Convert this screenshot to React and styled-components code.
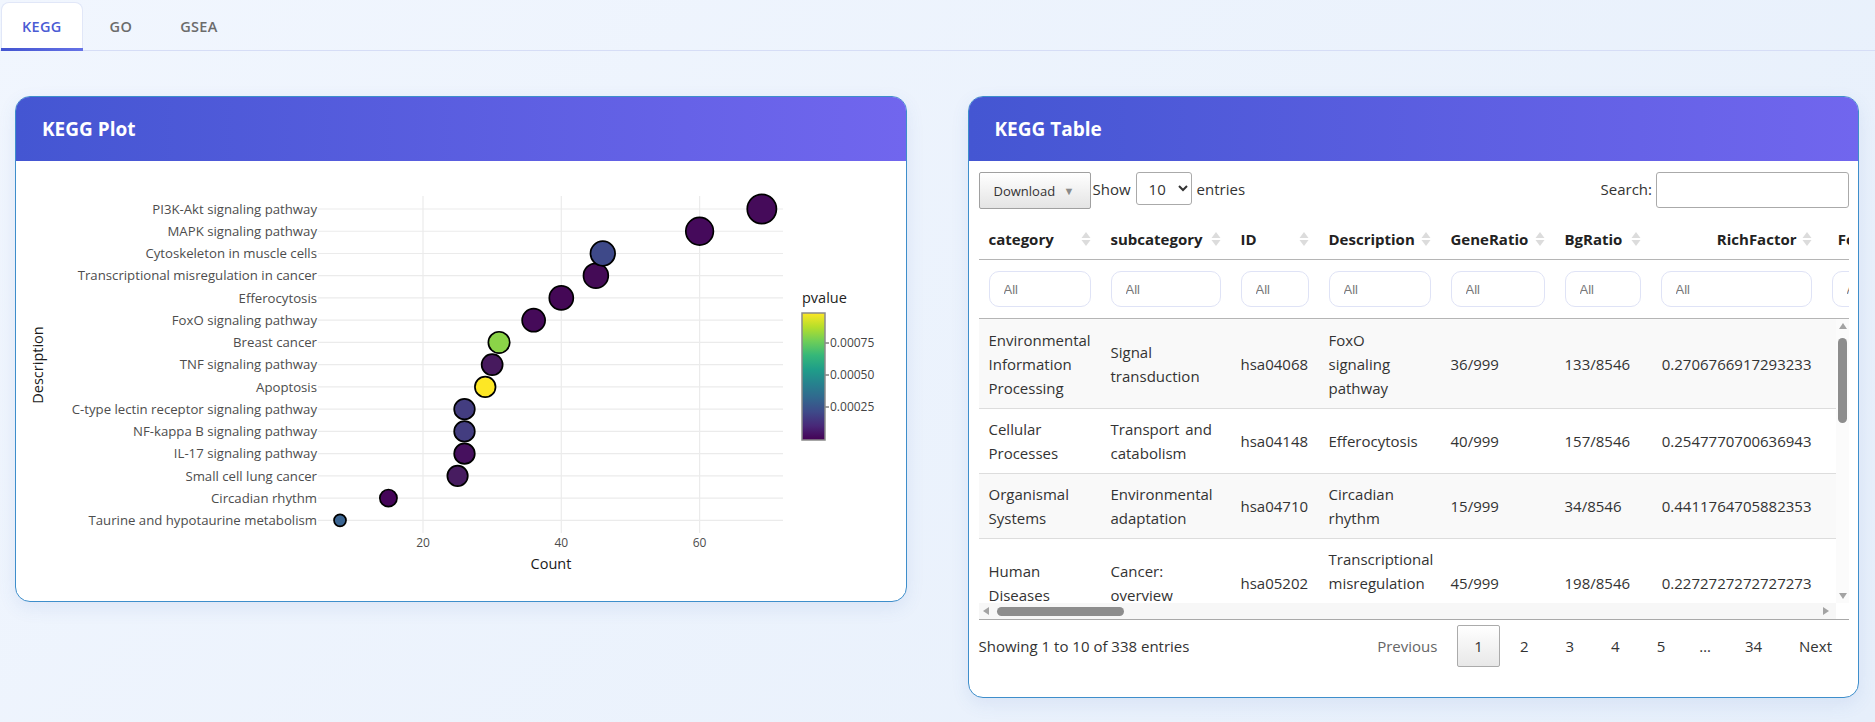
import React from 'react';
import styled, { createGlobalStyle } from 'styled-components';

const GlobalStyle = createGlobalStyle`
  html { min-height: 100%; }
  body {
    margin: 0;
    min-height: 722px;
    font-family: "Open Sans", "Noto Sans", sans-serif;
    color: #333;
    background: linear-gradient(135deg, #f1f6fe 0%, #e6effb 100%);
  }
  * { box-sizing: border-box; }
`;

// ---- data ----
const pathways = [
  { name: 'PI3K-Akt signaling pathway', count: 69, r: 14.6, color: '#450b5a' },
  { name: 'MAPK signaling pathway', count: 60, r: 13.8, color: '#450a5b' },
  { name: 'Cytoskeleton in muscle cells', count: 46, r: 12.3, color: '#3e4989' },
  { name: 'Transcriptional misregulation in cancer', count: 45, r: 12.4, color: '#440b56' },
  { name: 'Efferocytosis', count: 40, r: 12, color: '#440856' },
  { name: 'FoxO signaling pathway', count: 36, r: 11.5, color: '#450a59' },
  { name: 'Breast cancer', count: 31, r: 10.7, color: '#8bd448' },
  { name: 'TNF signaling pathway', count: 30, r: 10.5, color: '#471a5e' },
  { name: 'Apoptosis', count: 29, r: 10.3, color: '#fde725' },
  { name: 'C-type lectin receptor signaling pathway', count: 26, r: 10.3, color: '#433d80' },
  { name: 'NF-kappa B signaling pathway', count: 26, r: 10.3, color: '#433d80' },
  { name: 'IL-17 signaling pathway', count: 26, r: 10.3, color: '#46105e' },
  { name: 'Small cell lung cancer', count: 25, r: 10.2, color: '#471c60' },
  { name: 'Circadian rhythm', count: 15, r: 8.6, color: '#450559' },
  { name: 'Taurine and hypotaurine metabolism', count: 8, r: 6, color: '#3b6592' },
];

const viridis = ['#440154', '#482878', '#3e4a89', '#31688e', '#26828e', '#1f9e89', '#35b779', '#6ece58', '#b5de2b', '#fde725'];

const columns = [
  { key: 'category', w: 122 },
  { key: 'subcategory', w: 130 },
  { key: 'ID', w: 88 },
  { key: 'Description', w: 122 },
  { key: 'GeneRatio', w: 114 },
  { key: 'BgRatio', w: 96 },
  { key: 'RichFactor', w: 171, num: true },
  { key: 'FoldEnrichment', w: 160, num: true },
  { key: 'zScore', w: 150, num: true },
  { key: 'pvalue', w: 200, num: true },
  { key: 'p.adjust', w: 200, num: true },
  { key: 'qvalue', w: 200, num: true },
  { key: 'geneID', w: 3700 },
  { key: 'Count', w: 90, num: true },
];
const tableWidth = columns.reduce((s, c) => s + c.w, 0);

const rows = [
  ['Environmental Information Processing', 'Signal transduction', 'hsa04068', 'FoxO signaling pathway', '36/999', '133/8546', '0.2706766917293233', '2.31548169738554', '5.09736', '1.43e-06', '0.000161', '0.000131', 'FOXO1/FOXO3/CDKN1A/GADD45A/SGK1/IRS2/BCL6/PLK2/TGFB2/KLF2', '36'],
  ['Cellular Processes', 'Transport and catabolism', 'hsa04148', 'Efferocytosis', '40/999', '157/8546', '0.2547770700636943', '2.17947183297029', '4.98751', '1.52e-06', '0.000161', '0.000131', 'MERTK/AXL/GAS6/CD36/ITGB3/ABCA1/NR4A1/PPARG/IL10/TGFB1', '40'],
  ['Organismal Systems', 'Environmental adaptation', 'hsa04710', 'Circadian rhythm', '15/999', '34/8546', '0.4411764705882353', '3.77394159926981', '5.21472', '4.02e-06', '0.000248', '0.000202', 'PER1/PER2/PER3/CRY1/CRY2/ARNTL/NR1D1/BHLHE40/BHLHE41', '15'],
  ['Human Diseases', 'Cancer: overview', 'hsa05202', 'Transcriptional misregulation in cancer', '45/999', '198/8546', '0.2272727272727273', '1.94419419419419', '4.46123', '1.13e-05', '0.000515', '0.000419', 'CEBPA/CEBPB/ID2/MYC/NR4A3/RUNX1/BCL6/CDKN1A/PLAT/IL6', '45'],
  ['Environmental Information Processing', 'Signal transduction', 'hsa04151', 'PI3K-Akt signaling pathway', '69/999', '362/8546', '0.1906077348066298', '1.63053446931898', '3.89052', '3.09e-05', '0.00102', '0.000829', 'AKT3/COL1A1/COL4A1/EGFR/FGF2/IL6/ITGA5/KDR/PDGFRB/VEGFA', '69'],
  ['Environmental Information Processing', 'Signal transduction', 'hsa04010', 'MAPK signaling pathway', '60/999', '300/8546', '0.2', '1.71091091091091', '4.01245', '2.87e-05', '0.00102', '0.000829', 'DUSP1/DUSP6/FOS/JUN/MAP3K8/NR4A1/RASGRP3/TGFB2/FGF7', '60'],
  ['Organismal Systems', 'Immune system', 'hsa04657', 'IL-17 signaling pathway', '26/999', '95/8546', '0.2736842105263158', '2.34120909910383', '3.70214', '9.68e-05', '0.00251', '0.00204', 'CXCL1/CXCL2/CXCL8/FOS/FOSB/JUN/IL6/MMP3/PTGS2/S100A8', '26'],
  ['Cellular Processes', 'Cell growth and death', 'hsa04210', 'Apoptosis', '29/999', '136/8546', '0.2132352941176471', '1.82409468586233', '3.01872', '0.000962', '0.0124', '0.0101', 'BCL2/BIRC3/CASP8/FOS/GADD45A/JUN/TNFRSF10B/TUBA1A', '29'],
  ['Environmental Information Processing', 'Signal transduction', 'hsa04668', 'TNF signaling pathway', '30/999', '119/8546', '0.2521008403361345', '2.15655156833308', '3.66408', '8.21e-05', '0.00236', '0.00192', 'BIRC3/CCL2/CXCL1/CXCL2/FOS/JUNB/IL6/NFKBIA/SOCS3', '30'],
  ['Human Diseases', 'Cancer: specific types', 'hsa05222', 'Small cell lung cancer', '25/999', '93/8546', '0.2688172043010753', '2.29958514152021', '3.55801', '0.000161', '0.00371', '0.00302', 'BCL2/BIRC3/CDKN1A/COL4A1/ITGA2/LAMB3/MYC/NFKBIA', '25'],
];

// ---- layout ----
const TabBar = styled.nav`
  display: flex;
  gap: 6px;
  height: 51px;
  padding: 2px 0 0 1px;
  border-bottom: 1px solid #d6ddf6;
`;

const Tab = styled.div`
  position: relative;
  display: flex;
  align-items: center;
  padding: 0 20px;
  font-size: 14.5px;
  font-weight: 600;
  letter-spacing: 0.3px;
  color: ${p => (p.$active ? '#4a5bd4' : '#6b6b6b')};
  background: ${p => (p.$active ? '#fff' : 'transparent')};
  border: 1px solid ${p => (p.$active ? '#e1e7f8' : 'transparent')};
  border-bottom: none;
  border-radius: 8px 8px 0 0;

  &::after {
    content: '';
    display: ${p => (p.$active ? 'block' : 'none')};
    position: absolute;
    left: -1px;
    right: -1px;
    bottom: -1px;
    height: 3px;
    background: linear-gradient(90deg, #4354d0, #6572e6);
  }
`;

const Main = styled.main`
  display: grid;
  grid-template-columns: 1fr 1fr;
  gap: 61px;
  align-items: start;
  padding: 45px 16px 0 15px;
`;

const Card = styled.section`
  background: #fff;
  border: 1px solid #3e8ecb;
  border-radius: 15px;
  overflow: hidden;
  box-shadow: 0 6px 18px rgba(70, 110, 190, 0.1);
`;

const CardHeader = styled.header`
  display: flex;
  align-items: center;
  height: 64px;
  padding: 0 26px;
  background: linear-gradient(90deg, #4456d2 0%, #7166ee 100%);
`;

const CardTitle = styled.h2`
  margin: 0;
  font-size: 19px;
  font-weight: 700;
  color: #fff;
`;

const PlotBody = styled.div`
  height: 440px;
  svg { display: block; }
`;

const TableBody = styled.div`
  padding: 11px 9px 30px 10px;
  font-size: 15px;
`;

const Toolbar = styled.div`
  display: flex;
  align-items: flex-start;
  margin-bottom: 10px;
`;

const DownloadButton = styled.button`
  display: flex;
  align-items: center;
  justify-content: space-between;
  width: 112px;
  height: 37px;
  padding: 0 15px 0 14px;
  font-family: inherit;
  font-size: 13px;
  color: #333;
  border: 1px solid #a0a0a0;
  border-radius: 2px;
  background: linear-gradient(to bottom, #ffffff 0%, #e4e4e4 100%);

  span { font-size: 11px; color: #8a8a8a; }
`;

const Label = styled.label`
  display: flex;
  align-items: flex-start;
  gap: 5px;
  line-height: 34px;
  margin-left: ${p => (p.$right ? 'auto' : '2px')};
`;

const LengthSelect = styled.select`
  width: 56px;
  height: 33px;
  padding: 0 4px 0 8px;
  font-family: inherit;
  font-size: 15px;
  color: #333;
  border: 1px solid #aaa;
  border-radius: 3px;
  background: #fff;
`;

const SearchInput = styled.input`
  width: 193px;
  height: 36px;
  margin-left: -1px;
  border: 1px solid #aaa;
  border-radius: 3px;
`;

const HeadScroll = styled.div`
  overflow: hidden;
`;

const ScrollFrame = styled.div`
  display: grid;
  grid-template-columns: 1fr 13px;
  grid-template-rows: 284px 16px;
  border-bottom: 1px solid #a9a9a9;
`;

const Viewport = styled.div`
  overflow: hidden;
`;

const VBar = styled.div`
  display: flex;
  flex-direction: column;
  align-items: center;
  background: #fbfbfb;
`;

const HBar = styled.div`
  display: flex;
  align-items: center;
  padding-right: 3px;
  background: #f7f7f7;
`;

const Corner = styled.div`
  background: #fff;
`;

const ArrowBox = styled.div`
  display: flex;
  align-items: center;
  justify-content: center;
  flex-shrink: 0;
  width: ${p => (p.$h ? '14px' : '13px')};
  height: ${p => (p.$h ? '16px' : '14px')};

  &::before {
    content: '';
    width: 0;
    height: 0;
    border-style: solid;
    border-color: transparent;
    ${p => p.$dir === 'up' && 'border-width: 0 4.5px 6px; border-bottom-color: #a3a3a3;'}
    ${p => p.$dir === 'down' && 'border-width: 6px 4.5px 0; border-top-color: #a3a3a3;'}
    ${p => p.$dir === 'left' && 'border-width: 4.5px 6px 4.5px 0; border-right-color: #a3a3a3;'}
    ${p => p.$dir === 'right' && 'border-width: 4.5px 0 4.5px 6px; border-left-color: #a3a3a3;'}
  }
`;

const Thumb = styled.div`
  flex-shrink: 0;
  background: #8d8d8d;
  border-radius: 5px;
  ${p => (p.$h
    ? 'width: 127px; height: 9px; margin-left: 4px;'
    : 'width: 9px; height: 85px; margin-top: 5px;')}
`;

const Spacer = styled.div`
  flex: 1;
`;

const DataTable = styled.table`
  table-layout: fixed;
  width: ${tableWidth}px;
  border-collapse: separate;
  border-spacing: 0;
`;

const HeadCell = styled.th`
  padding: 8px 10px;
  line-height: 24px;
  font-size: 15px;
  font-weight: 700;
  color: #222;
  text-align: left;
  white-space: nowrap;
  overflow: hidden;
  border-bottom: 1px solid #b5b5b5;
`;

const HeadInner = styled.div`
  display: flex;
  align-items: center;
  justify-content: ${p => (p.$num ? 'flex-end' : 'space-between')};
  gap: 5px;
  svg { flex-shrink: 0; }
`;

const FilterCell = styled.th`
  padding: 11px 10px;
  border-bottom: 1px solid #b5b5b5;
`;

const FilterInput = styled.input`
  display: block;
  width: 100%;
  height: 36px;
  padding: 0 14px;
  font-family: "Liberation Sans", Arial, sans-serif;
  font-size: 13px;
  border: 1px solid #dfe3f6;
  border-radius: 10px;
  &::placeholder { color: #777; }
`;

const BodyRow = styled.tr`
  &:nth-child(odd) td { background: #f9f9f9; }
  &:first-child td { border-top-color: transparent; }
`;

const Cell = styled.td`
  padding: 8px 10px;
  line-height: 24px;
  font-size: 15px;
  word-spacing: 2px;
  color: #333;
  vertical-align: middle;
  text-align: ${p => (p.$num ? 'right' : 'left')};
  border-top: 1px solid #ddd;
  background: #fff;
`;

const Footer = styled.div`
  display: flex;
  align-items: center;
  justify-content: space-between;
  margin-top: 5px;
`;

const Pager = styled.div`
  display: flex;
  align-items: center;
`;

const PageButton = styled.button`
  height: 42px;
  padding: 0 16px;
  margin-left: 3px;
  font-family: inherit;
  font-size: 15px;
  color: ${p => (p.$disabled ? '#666' : '#333')};
  border: 1px solid ${p => (p.$current ? '#ababab' : 'transparent')};
  border-radius: 2px;
  background: ${p => (p.$current ? 'linear-gradient(to bottom, #ffffff 0%, #e8e8e8 100%)' : 'transparent')};
`;

const Ellipsis = styled.span`
  padding: 0 14px;
  margin-left: 3px;
`;

const SortIcon = () => (
  <svg width="10" height="16" viewBox="0 0 10 16">
    <path d="M5 1 L9.5 7 H0.5 Z M0.5 9 H9.5 L5 15 Z" fill="#dcdcdc" />
  </svg>
);

function DotPlot() {
  const xOf = c => 284.7 + c * 6.915;
  const yOf = i => 209 + i * 22.24;
  const font = '"Open Sans", "Noto Sans", sans-serif';
  return (
    <svg width="890" height="440" viewBox="16 161 890 440" fontFamily={font}>
      <defs>
        <linearGradient id="viridis" x1="0" y1="1" x2="0" y2="0">
          {viridis.map((c, i) => (
            <stop key={c} offset={i / (viridis.length - 1)} stopColor={c} />
          ))}
        </linearGradient>
      </defs>
      {pathways.map((p, i) => (
        <line key={p.name} x1="318" x2="783" y1={yOf(i)} y2={yOf(i)} stroke="#ebebeb" strokeWidth="1.2" />
      ))}
      {[20, 40, 60].map(t => (
        <line key={t} x1={xOf(t)} x2={xOf(t)} y1="196" y2="533" stroke="#ebebeb" strokeWidth="1.2" />
      ))}
      {pathways.map((p, i) => (
        <text key={p.name} x="317" y={yOf(i)} dy="0.36em" textAnchor="end" fontSize="13.2" fill="#4d4d4d">
          {p.name}
        </text>
      ))}
      {[20, 40, 60].map(t => (
        <text key={t} x={xOf(t)} y="543" dy="0.36em" textAnchor="middle" fontSize="12" fill="#4d4d4d">{t}</text>
      ))}
      <text x="551" y="564" dy="0.36em" textAnchor="middle" fontSize="14.5" fill="#1a1a1a">Count</text>
      <text transform="translate(38 365) rotate(-90)" dy="0.36em" textAnchor="middle" fontSize="14.5" fill="#1a1a1a">Description</text>
      {pathways.map((p, i) => ({ ...p, i })).reverse().map(p => (
        <circle key={p.name} cx={xOf(p.count)} cy={yOf(p.i)} r={p.r} fill={p.color} stroke="#000" strokeWidth="1.7" />
      ))}
      <text x="802" y="298" dy="0.36em" fontSize="14.5" fill="#222">pvalue</text>
      <rect x="802" y="313" width="23" height="127" fill="url(#viridis)" stroke="#8a8a8a" strokeWidth="1.5" />
      {[['0.00075', 343], ['0.00050', 375], ['0.00025', 407]].map(([l, y]) => (
        <g key={l}>
          <line x1="825.5" x2="829" y1={y} y2={y} stroke="#444" />
          <text x="830" y={y} dy="0.36em" fontSize="12" fill="#444">{l}</text>
        </g>
      ))}
    </svg>
  );
}

function ColGroup() {
  return (
    <colgroup>
      {columns.map(c => <col key={c.key} style={{ width: c.w }} />)}
    </colgroup>
  );
}

function KeggTable() {
  return (
    <TableBody>
      <Toolbar>
        <DownloadButton>Download <span>▼</span></DownloadButton>
        <Label>
          Show
          <LengthSelect defaultValue="10">
            <option>10</option>
            <option>25</option>
            <option>50</option>
          </LengthSelect>
          entries
        </Label>
        <Label $right>
          Search:
          <SearchInput type="search" />
        </Label>
      </Toolbar>

      <HeadScroll>
        <DataTable>
          <ColGroup />
          <thead>
            <tr>
              {columns.map(c => (
                <HeadCell key={c.key}>
                  <HeadInner $num={c.num}>
                    <span>{c.key}</span>
                    <SortIcon />
                  </HeadInner>
                </HeadCell>
              ))}
            </tr>
            <tr>
              {columns.map(c => (
                <FilterCell key={c.key}>
                  <FilterInput placeholder="All" />
                </FilterCell>
              ))}
            </tr>
          </thead>
        </DataTable>
      </HeadScroll>

      <ScrollFrame>
        <Viewport>
          <DataTable>
            <ColGroup />
            <tbody>
              {rows.map(r => (
                <BodyRow key={r[2]}>
                  {r.map((v, j) => (
                    <Cell key={columns[j].key} $num={columns[j].num}>{v}</Cell>
                  ))}
                </BodyRow>
              ))}
            </tbody>
          </DataTable>
        </Viewport>
        <VBar>
          <ArrowBox $dir="up" />
          <Thumb />
          <Spacer />
          <ArrowBox $dir="down" />
        </VBar>
        <HBar>
          <ArrowBox $h $dir="left" />
          <Thumb $h />
          <Spacer />
          <ArrowBox $h $dir="right" />
        </HBar>
        <Corner />
      </ScrollFrame>

      <Footer>
        <span>Showing 1 to 10 of 338 entries</span>
        <Pager>
          <PageButton $disabled>Previous</PageButton>
          <PageButton $current>1</PageButton>
          <PageButton>2</PageButton>
          <PageButton>3</PageButton>
          <PageButton>4</PageButton>
          <PageButton>5</PageButton>
          <Ellipsis>…</Ellipsis>
          <PageButton>34</PageButton>
          <PageButton>Next</PageButton>
        </Pager>
      </Footer>
    </TableBody>
  );
}

export default function App() {
  return (
    <>
      <GlobalStyle />
      <TabBar>
        <Tab $active>KEGG</Tab>
        <Tab>GO</Tab>
        <Tab>GSEA</Tab>
      </TabBar>
      <Main>
        <Card>
          <CardHeader><CardTitle>KEGG Plot</CardTitle></CardHeader>
          <PlotBody><DotPlot /></PlotBody>
        </Card>
        <Card>
          <CardHeader><CardTitle>KEGG Table</CardTitle></CardHeader>
          <KeggTable />
        </Card>
      </Main>
    </>
  );
}
